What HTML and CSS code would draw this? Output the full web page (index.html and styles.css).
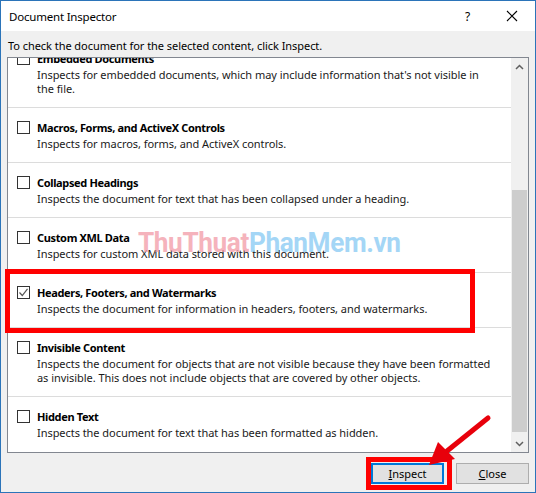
FILE: index.html
```html
<!DOCTYPE html>
<html>
<head>
<meta charset="utf-8">
<link rel="stylesheet" href="styles.css">
</head>
<body>
<div class="window">
  <div class="titlebar">
    <span class="title">Document Inspector</span>
    <span class="help">?</span>
    <svg class="close-x" width="12" height="12" viewBox="0 0 12 12"><path d="M1 1 L11 11 M11 1 L1 11" stroke="#000" stroke-width="1.1" fill="none"/></svg>
  </div>
  <div class="instr">To check the document for the selected content, click Inspect.</div>
  <div class="listbox">
    <div class="items">
      <div class="item first">
        <div class="head"><span class="cb"></span><span class="name">Embedded Documents</span></div>
        <div class="desc">Inspects for embedded documents, which may include information that's not visible in<br>the file.</div>
      </div>
      <div class="item">
        <div class="head"><span class="cb"></span><span class="name">Macros, Forms, and ActiveX Controls</span></div>
        <div class="desc">Inspects for macros, forms, and ActiveX controls.</div>
      </div>
      <div class="item">
        <div class="head"><span class="cb"></span><span class="name">Collapsed Headings</span></div>
        <div class="desc">Inspects the document for text that has been collapsed under a heading.</div>
      </div>
      <div class="item">
        <div class="head"><span class="cb"></span><span class="name">Custom XML Data</span></div>
        <div class="desc">Inspects for custom XML data stored with this document.</div>
      </div>
      <div class="item">
        <div class="head"><span class="cb checked"><svg width="11" height="11" viewBox="0 0 11 11"><path d="M1.5 5.5 L4.3 8.5 L9.5 1.8" stroke="#555" stroke-width="1.2" fill="none"/></svg></span><span class="name">Headers, Footers, and Watermarks</span></div>
        <div class="desc">Inspects the document for information in headers, footers, and watermarks.</div>
      </div>
      <div class="item">
        <div class="head"><span class="cb"></span><span class="name">Invisible Content</span></div>
        <div class="desc">Inspects the document for objects that are not visible because they have been formatted<br>as invisible. This does not include objects that are covered by other objects.</div>
      </div>
      <div class="item last">
        <div class="head"><span class="cb"></span><span class="name">Hidden Text</span></div>
        <div class="desc">Inspects the document for text that has been formatted as hidden.</div>
      </div>
    </div>
    <div class="scrollbar">
      <div class="arrow"><svg width="9" height="6" viewBox="0 0 9 6"><path d="M1 5 L4.5 1.5 L8 5" stroke="#606060" stroke-width="1.5" fill="none"/></svg></div>
      <div class="track"><div class="thumb"></div></div>
      <div class="arrow"><svg width="9" height="6" viewBox="0 0 9 6"><path d="M1 1 L4.5 4.5 L8 1" stroke="#606060" stroke-width="1.5" fill="none"/></svg></div>
    </div>
  </div>
  <div class="buttons">
    <button class="btn default"><u>I</u>nspect</button>
    <button class="btn"><u>C</u>lose</button>
  </div>
  <div class="watermark"><span class="wm-red">ThuThuat</span><span class="wm-blue">PhanMem.vn</span></div>
  <div class="redbox box-headers"></div>
  <div class="redbox box-inspect"></div>
  <svg class="red-arrow" width="70" height="60" viewBox="0 0 70 60">
    <path d="M63 5 L22 38" stroke="#e8000b" stroke-width="5" stroke-linecap="round"/>
    <polygon points="4,52 13,29 30,46" fill="#e8000b"/>
  </svg>
</div>
</body>
</html>
```
FILE: styles.css
```css
* { box-sizing: border-box; }
html, body { margin: 0; padding: 0; }
body {
  width: 536px;
  height: 493px;
  overflow: hidden;
  font-family: "Noto Sans", "Open Sans", sans-serif;
  font-size: 11px;
  letter-spacing: -0.05px;
  color: #000;
}
.window {
  position: relative;
  width: 536px;
  height: 493px;
  border: 1px solid #2b74b9;
  background: #f0f0f0;
  display: flex;
  flex-direction: column;
}
.titlebar {
  height: 30px;
  background: #fff;
  display: flex;
  align-items: center;
  padding-left: 8px;
  font-size: 11.5px;
  letter-spacing: -0.2px;
}
.title { flex: 1; }
.help { margin-right: 36px; font-size: 12px; }
.close-x { margin-right: 17px; }
.instr {
  padding: 7px 0 0 7px;
  height: 26px;
  line-height: 16px;
}
.listbox {
  margin: 0 6px;
  height: 396px;
  border: 1px solid #828790;
  background: #fff;
  display: flex;
}
.items {
  flex: 1;
  overflow: hidden;
}
.item {
  padding: 11px 0 11px 9px;
  border-bottom: 1px solid #dcdcdc;
}
.item.first { margin-top: -19px; }
.item.last { border-bottom: none; }
.head {
  display: flex;
  align-items: center;
  height: 16px;
  margin-bottom: 2px;
}
.cb {
  width: 13px;
  height: 13px;
  border: 1px solid #333;
  background: #fff;
  margin-right: 7px;
  display: flex;
  align-items: center;
  justify-content: center;
}
.name { font-weight: bold; letter-spacing: -0.35px; }
.desc {
  padding-left: 20px;
  line-height: 14px;
  color: #1a1a1a;
  white-space: nowrap;
}
.scrollbar {
  width: 17px;
  background: #f0f0f0;
  display: flex;
  flex-direction: column;
}
.arrow {
  height: 17px;
  display: flex;
  align-items: center;
  justify-content: center;
}
.track {
  flex: 1;
  padding: 115px 1px 3px 1px;
  display: flex;
}
.thumb {
  flex: 1;
  background: #cdcdcd;
}
.buttons {
  display: flex;
  justify-content: flex-end;
  gap: 12px;
  padding: 10px 6px 0 0;
}
.btn {
  height: 21px;
  width: 73px;
  font-family: inherit;
  font-size: 11px;
  background: #e1e1e1;
  border: 1px solid #adadad;
  padding: 0;
  color: #000;
}
.btn.default { border-color: #0078d7; box-shadow: inset 0 0 0 1px #0078d7; }
.watermark {
  position: absolute;
  left: 137px;
  top: 226px;
  font-family: "Roboto", sans-serif;
  font-weight: bold;
  font-size: 27px;
  letter-spacing: -0.4px;
  transform: scaleX(0.97);
  transform-origin: left center;
  opacity: 0.75;
  pointer-events: none;
}
.wm-red { color: #f29aa6; }
.wm-blue { color: #86c9f3; }
.redbox {
  position: absolute;
  border: 5px solid #ff0000;
}
.box-headers { left: 4px; top: 268px; width: 470px; height: 64px; }
.box-inspect { left: 365px; top: 456px; width: 86px; height: 33px; }
.red-arrow {
  position: absolute;
  left: 424px;
  top: 412px;
}
```
